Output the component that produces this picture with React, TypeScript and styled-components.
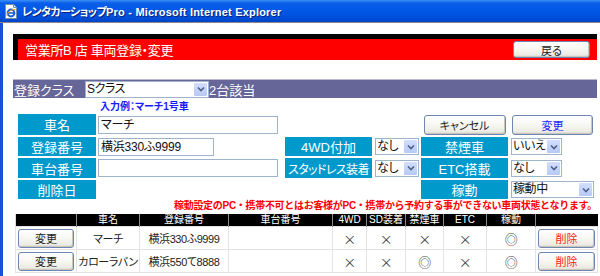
import React from 'react';
import styled, { createGlobalStyle } from 'styled-components';

const GlobalStyle = createGlobalStyle`
  html, body {
    margin: 0;
    padding: 0;
    background: #ffffff;
    overflow: hidden;
  }
  body {
    font-family: "Liberation Sans", "Noto Sans CJK JP", sans-serif;
    font-feature-settings: "palt";
  }
`;

const Window = styled.div`
  width: 600px;
  height: 276px;
  overflow: hidden;
  background: #ffffff;
`;

const TitleBar = styled.div`
  height: 22px;
  display: flex;
  align-items: center;
  gap: 4px;
  padding-left: 4px;
  background: linear-gradient(#3d8ef7 0, #0a5fe9 3px, #0058e6 45%, #004fdb 80%, #0044c7 100%);
  border-bottom: 1px solid #8a8a8a;
`;

const TitleText = styled.span`
  color: #ffffff;
  font-size: 11px;
  font-weight: bold;
  white-space: nowrap;
  letter-spacing: 0.2px;
  text-shadow: 1px 1px 0 #0a1f7a;
`;

const Kana = styled.span`
  letter-spacing: -0.6px;
`;

const Client = styled.div`
  border-left: 3px solid #1a4fdc;
  padding: 11px 0 0 10px;
  height: 253px;
`;

const PageHeader = styled.div`
  box-sizing: border-box;
  width: 584px;
  height: 26px;
  border-top: 5px solid #000000;
  border-left: 5px solid #000000;
  background: #ff0000;
  display: flex;
  align-items: center;
  justify-content: space-between;
  padding: 0 7px 0 7px;
`;

const HeaderTitle = styled.div`
  color: #ffffff;
  font-size: 13px;
  letter-spacing: -0.3px;
  white-space: pre;
`;

const XpButton = styled.button<{ $w: number; $h?: number; $tone?: 'plain' | 'blue' | 'red' }>`
  width: ${(p) => p.$w}px;
  height: ${(p) => p.$h ?? 18}px;
  padding: 0;
  border: 1px solid #6d87b0;
  border-radius: 3px;
  background: linear-gradient(#ffffff 0%, #f7f7f2 50%, #ecebe4 85%, #d8d6cc 100%);
  font-family: "Liberation Sans", "Noto Sans CJK JP", sans-serif;
  font-feature-settings: "palt";
  font-size: 11px;
  color: ${(p) => (p.$tone === 'blue' ? '#1a1aff' : p.$tone === 'red' ? '#ff1a1a' : '#222222')};
  box-shadow: inset -1px -1px 0 #c9c7bc;
`;

const ClassBar = styled.div`
  margin-top: 19px;
  width: 584px;
  height: 18px;
  border-top: 1px solid #b9b9d3;
  background: #666699;
  display: flex;
  align-items: center;
  color: #ffffff;
  font-size: 13px;
`;

const ClassLabel = styled.span`
  width: 70px;
  padding-left: 1px;
`;

const Hint = styled.div`
  height: 16px;
  line-height: 17px;
  padding-left: 87px;
  color: #1a1aff;
  font-size: 10px;
  font-weight: bold;
`;

const FormGrid = styled.div`
  display: grid;
  grid-template-columns: 78px 185px 87px 45px 87px 85px;
  grid-template-rows: 21px 19px 20px 19px;
  gap: 2px;
  margin-left: 5px;
`;

const Label = styled.div<{ $tight?: boolean }>`
  background: #0099cc;
  color: #ffffff;
  font-size: ${(p) => (p.$tight ? 12 : 13)}px;
  letter-spacing: ${(p) => (p.$tight ? '-0.6px' : '0')};
  display: flex;
  align-items: center;
  justify-content: center;
  white-space: nowrap;
  overflow: hidden;
`;

const Field = styled.div<{ $center?: boolean; $span?: number }>`
  display: flex;
  align-items: center;
  justify-content: ${(p) => (p.$center ? 'center' : 'flex-start')};
  grid-column: ${(p) => (p.$span ? `span ${p.$span}` : 'auto')};
`;

const TextBox = styled.div<{ $w: number }>`
  width: ${(p) => p.$w}px;
  height: 18px;
  box-sizing: border-box;
  border: 1px solid #9fb3cc;
  background: #ffffff;
  font-size: 12px;
  line-height: 16px;
  padding-left: 2px;
  color: #111111;
  white-space: nowrap;
  letter-spacing: -0.2px;
`;

const SelectBox = styled.div<{ $w: number; $h?: number }>`
  width: ${(p) => p.$w}px;
  height: ${(p) => p.$h ?? 17}px;
  box-sizing: border-box;
  border: 1px solid #9fb3cc;
  background: #ffffff;
  display: flex;
  align-items: stretch;
  margin-left: 1px;
`;

const SelectText = styled.span`
  flex: 1;
  min-width: 0;
  font-size: 12px;
  line-height: 15px;
  padding-left: 1px;
  letter-spacing: -0.4px;
  color: #111111;
  white-space: nowrap;
`;

const DropButton = styled.span`
  flex: none;
  width: 13px;
  margin: 1px;
  background: linear-gradient(#d3defc, #b6c9f6);
  border-radius: 1px;
  display: flex;
  align-items: center;
  justify-content: center;
`;

const Notice = styled.div`
  width: 582px;
  height: 11px;
  line-height: 11px;
  margin: 1px 0 3px 2px;
  text-align: right;
  color: #ff0000;
  font-size: 10px;
  font-weight: bold;
  letter-spacing: -0.3px;
  font-feature-settings: normal;
  white-space: nowrap;
`;

const CarTable = styled.table`
  margin-left: 2px;
  width: 582px;
  table-layout: fixed;
  border-collapse: collapse;
  border-left: 1px solid #d9d9d9;
`;

const HeadCell = styled.th`
  background: #000000;
  color: #ffffff;
  height: 12px;
  padding: 0;
  font-size: 10px;
  font-weight: normal;
  line-height: 12px;
  border-left: 1px solid #8a8a8a;
  &:first-child {
    border-left: none;
  }
`;

const BodyCell = styled.td`
  height: 22px;
  padding: 0;
  text-align: center;
  font-size: 11px;
  letter-spacing: -0.4px;
  color: #222222;
  border: 1px solid #e3e3e3;
  white-space: nowrap;
`;

const Mark = styled.span`
  font-family: "Noto Sans CJK JP", sans-serif;
  font-size: 13px;
  color: #444444;
`;

const Chevron = () => (
  <svg width="8" height="6" viewBox="0 0 8 6">
    <path d="M1 1.5 L4 4.5 L7 1.5" stroke="#4d6185" strokeWidth="1.6" fill="none" />
  </svg>
);

const IeIcon = () => (
  <svg width="14" height="15" viewBox="0 0 14 15">
    <path d="M1.5 0.5 H9.5 L12.5 3.5 V14.5 H1.5 Z" fill="#ffffff" stroke="#7a8ea8" />
    <path d="M9.5 0.5 V3.5 H12.5" fill="#dfe6f0" stroke="#7a8ea8" />
    <circle cx="7" cy="9" r="3.4" fill="none" stroke="#1d5fd6" strokeWidth="2" />
    <path d="M4 9 H10" stroke="#1d5fd6" strokeWidth="1.6" />
    <path d="M2.5 11.5 C5 6, 10 4.5, 12 6" stroke="#f0b400" strokeWidth="1" fill="none" />
  </svg>
);

const Select = ({ w, h, value }: { w: number; h?: number; value: string }) => (
  <SelectBox $w={w} $h={h}>
    <SelectText>{value}</SelectText>
    <DropButton>
      <Chevron />
    </DropButton>
  </SelectBox>
);

const columns = [
  { title: '', width: 61 },
  { title: '車名', width: 63 },
  { title: '登録番号', width: 89 },
  { title: '車台番号', width: 104 },
  { title: '4WD', width: 34 },
  { title: 'SD装着', width: 39 },
  { title: '禁煙車', width: 38 },
  { title: 'ETC', width: 43 },
  { title: '稼動', width: 49 },
  { title: '', width: 62 },
];

const cars = [
  { name: 'マーチ', plate: '横浜330ふ9999', chassis: '', wd: false, sd: false, smoke: false, etc: false, active: true },
  { name: 'カローラバン', plate: '横浜550て8888', chassis: '', wd: false, sd: false, smoke: true, etc: false, active: true },
];

const flag = (v: boolean) => <Mark>{v ? '◎' : '×'}</Mark>;

const App = () => (
  <Window>
    <GlobalStyle />
    <TitleBar>
      <IeIcon />
      <TitleText>
        <Kana>レンタカーショップ</Kana>Pro - Microsoft Internet Explorer
      </TitleText>
    </TitleBar>
    <Client>
      <PageHeader>
        <HeaderTitle>営業所B 店 車両登録・変更</HeaderTitle>
        <XpButton $w={77} $h={17}>戻る</XpButton>
      </PageHeader>

      <ClassBar>
        <ClassLabel>登録クラス</ClassLabel>
        <Select w={124} value="Sクラス" />
        <span>2台該当</span>
      </ClassBar>

      <Hint>入力例：マーチ1号車</Hint>

      <FormGrid>
        <Label>車名</Label>
        <Field>
          <TextBox $w={180}>マーチ</TextBox>
        </Field>
        <Field $span={2} />
        <Field $center>
          <XpButton $w={82} $h={20}>キャンセル</XpButton>
        </Field>
        <Field $center>
          <XpButton $w={81} $h={20} $tone="blue">変更</XpButton>
        </Field>

        <Label>登録番号</Label>
        <Field>
          <TextBox $w={116}>横浜330ふ9999</TextBox>
        </Field>
        <Label>4WD付加</Label>
        <Field>
          <Select w={44} value="なし" />
        </Field>
        <Label>禁煙車</Label>
        <Field>
          <Select w={51} value="いいえ" />
        </Field>

        <Label>車台番号</Label>
        <Field>
          <TextBox $w={180} />
        </Field>
        <Label $tight>スタッドレス装着</Label>
        <Field>
          <Select w={44} value="なし" />
        </Field>
        <Label>ETC搭載</Label>
        <Field>
          <Select w={51} value="なし" />
        </Field>

        <Label>削除日</Label>
        <Field $span={3} />
        <Label>稼動</Label>
        <Field>
          <Select w={83} value="稼動中" />
        </Field>
      </FormGrid>

      <Notice>稼動設定のPC・携帯不可とはお客様がPC・携帯から予約する事ができない車両状態となります。</Notice>

      <CarTable>
        <colgroup>
          {columns.map((c, i) => (
            <col key={i} style={{ width: c.width }} />
          ))}
        </colgroup>
        <thead>
          <tr>
            {columns.map((c, i) => (
              <HeadCell key={i}>{c.title}</HeadCell>
            ))}
          </tr>
        </thead>
        <tbody>
          {cars.map((car) => (
            <tr key={car.name}>
              <BodyCell>
                <XpButton $w={56} $h={19}>変更</XpButton>
              </BodyCell>
              <BodyCell>{car.name}</BodyCell>
              <BodyCell>{car.plate}</BodyCell>
              <BodyCell>{car.chassis}</BodyCell>
              <BodyCell>{flag(car.wd)}</BodyCell>
              <BodyCell>{flag(car.sd)}</BodyCell>
              <BodyCell>{flag(car.smoke)}</BodyCell>
              <BodyCell>{flag(car.etc)}</BodyCell>
              <BodyCell>{flag(car.active)}</BodyCell>
              <BodyCell>
                <XpButton $w={57} $h={19} $tone="red">削除</XpButton>
              </BodyCell>
            </tr>
          ))}
        </tbody>
      </CarTable>
    </Client>
  </Window>
);

export default App;
